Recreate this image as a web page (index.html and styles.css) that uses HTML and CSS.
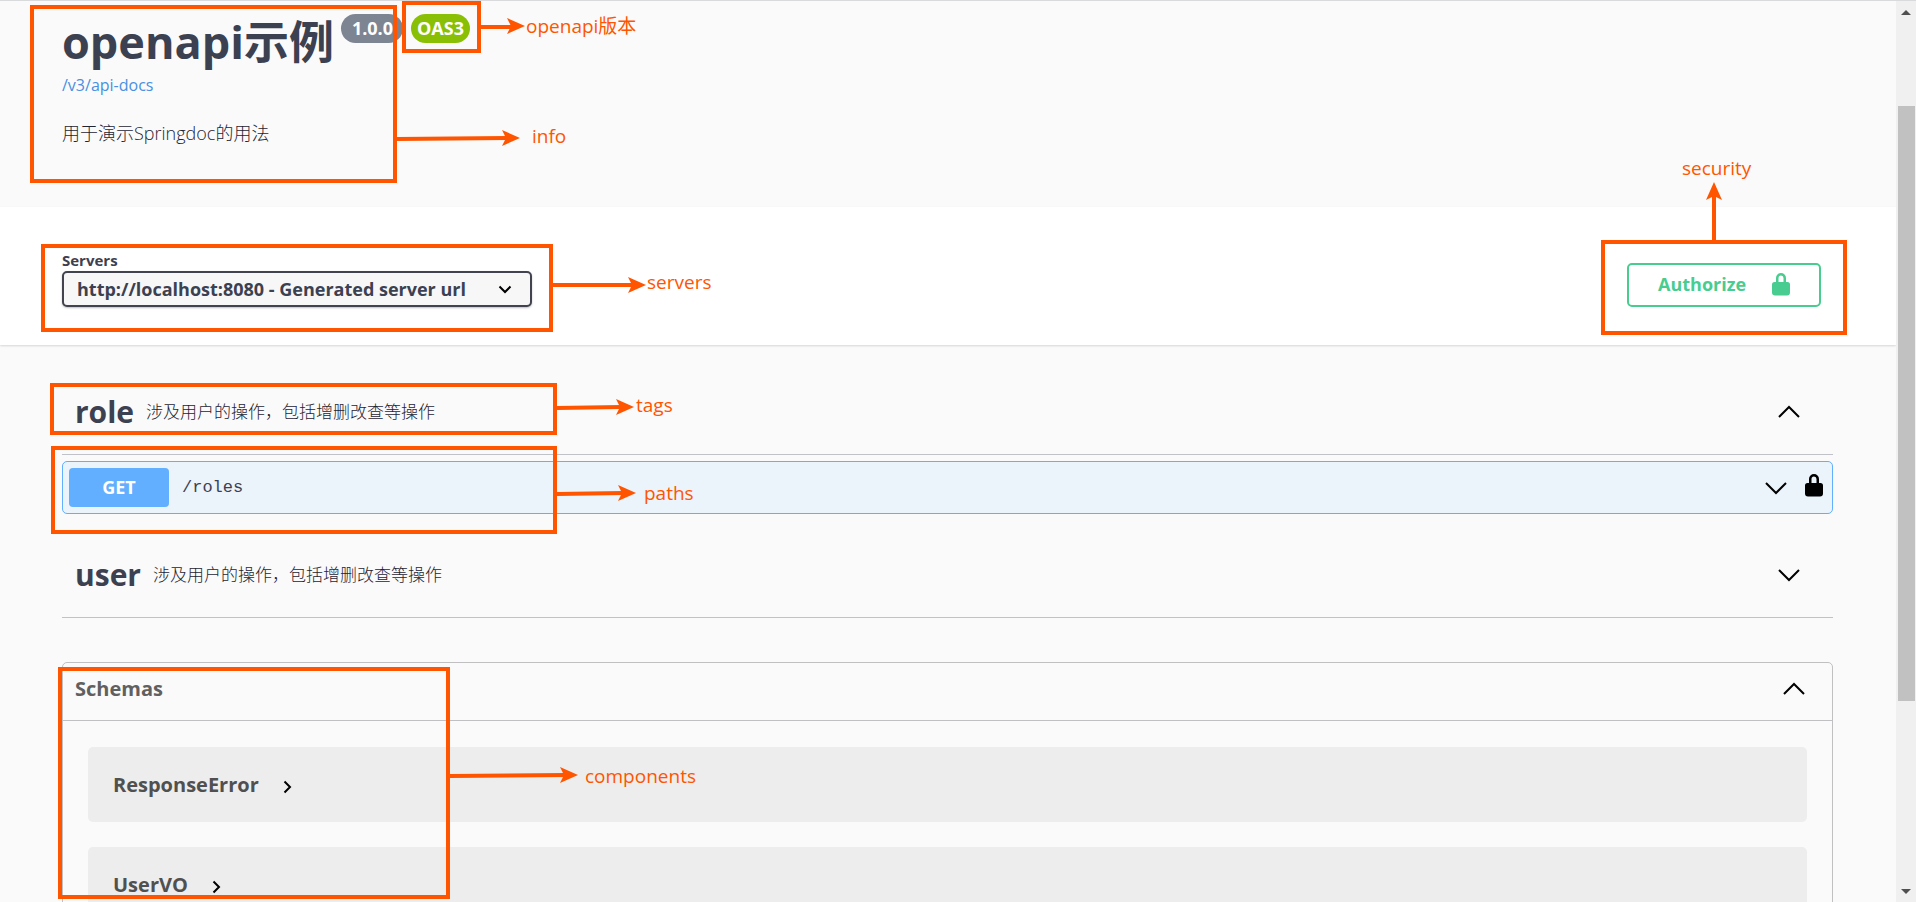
FILE: index.html
```html
<!DOCTYPE html>
<html lang="zh-CN">
<head>
<meta charset="utf-8">
<title>openapi示例</title>
<link rel="stylesheet" href="styles.css">
</head>
<body>
<div class="viewport">
  <main class="page">
    <header class="info wrapper">
      <div class="title-row">
        <h1 class="title">openapi示例</h1>
        <span class="badge badge-version">1.0.0</span>
        <span class="badge badge-oas">OAS3</span>
      </div>
      <a class="docs-link" href="#">/v3/api-docs</a>
      <p class="summary">用于演示Springdoc的用法</p>
    </header>

    <section class="schemes wrapper">
      <div class="servers">
        <label class="servers-label" for="server">Servers</label>
        <div class="select-wrap">
          <select class="server-select" id="server">
            <option>http://localhost:8080 - Generated server url</option>
          </select>
          <svg class="select-arrow" width="14" height="9" viewBox="0 0 14 9"><path d="M1.500 1.500 7 7l5.500-5.500"/></svg>
        </div>
      </div>
      <button class="authorize" type="button">
        <span>Authorize</span>
        <svg class="lock" width="18" height="23" viewBox="0 0 18 23"><path d="M4 9V5a5 5 0 0 1 10 0v4h1.500a2.500 2.500 0 0 1 2.500 2.500v8a3 3 0 0 1-3 3H3a3 3 0 0 1-3-3v-8A2.500 2.500 0 0 1 2.500 9zM6.500 9h5V5a2.500 2.500 0 0 0-5 0z"/></svg>
      </button>
    </section>

    <section class="operations wrapper">
      <div class="tag">
        <h2 class="tag-name">role</h2>
        <span class="tag-desc">涉及用户的操作，包括增删改查等操作</span>
        <button class="toggle" type="button" aria-label="Collapse role"><svg class="chevron" width="24" height="14" viewBox="0 0 24 14"><path d="M2 12 12 2l10 10"/></svg></button>
      </div>
      <div class="opblock">
        <span class="method">GET</span>
        <span class="path">/roles</span>
        <button class="toggle" type="button" aria-label="Expand /roles"><svg class="chevron" width="24" height="14" viewBox="0 0 24 14"><path d="M2 2l10 10L22 2"/></svg></button>
        <button class="toggle toggle-lock" type="button" aria-label="Authorization"><svg class="lock" width="18" height="23" viewBox="0 0 18 23"><path d="M4 9V5a5 5 0 0 1 10 0v4h1.500a2.500 2.500 0 0 1 2.500 2.500v8a3 3 0 0 1-3 3H3a3 3 0 0 1-3-3v-8A2.500 2.500 0 0 1 2.500 9zM6.500 9h5V5a2.500 2.500 0 0 0-5 0z"/></svg></button>
      </div>
      <div class="tag">
        <h2 class="tag-name">user</h2>
        <span class="tag-desc">涉及用户的操作，包括增删改查等操作</span>
        <button class="toggle" type="button" aria-label="Expand user"><svg class="chevron" width="24" height="14" viewBox="0 0 24 14"><path d="M2 2l10 10L22 2"/></svg></button>
      </div>
    </section>

    <section class="wrapper">
      <div class="models">
        <div class="models-head">
          <h3 class="models-title">Schemas</h3>
          <button class="toggle" type="button" aria-label="Collapse schemas"><svg class="chevron" width="24" height="14" viewBox="0 0 24 14"><path d="M2 12 12 2l10 10"/></svg></button>
        </div>
        <div class="models-list">
          <button class="model" type="button">ResponseError<svg class="caret" width="9" height="14" viewBox="0 0 9 14"><path d="M1.500 1.500 7 7l-5.500 5.500"/></svg></button>
          <button class="model" type="button">UserVO<svg class="caret" width="9" height="14" viewBox="0 0 9 14"><path d="M1.500 1.500 7 7l-5.500 5.500"/></svg></button>
        </div>
      </div>
    </section>
  </main>

  <div class="scrollbar">
    <svg width="10" height="5" viewBox="0 0 10 5"><path d="M0 5 5 0l5 5z"/></svg>
    <div class="thumb"></div>
    <svg width="10" height="5" viewBox="0 0 10 5"><path d="M0 0 5 5l5-5z"/></svg>
  </div>

  <svg class="notes notes-left" width="760" height="902" viewBox="0 0 760 902">
    <g class="frame">
      <rect x="32" y="7" width="363" height="174"/>
      <rect x="404" y="3" width="75" height="48"/>
      <rect x="43" y="246" width="508" height="84"/>
      <rect x="52" y="385" width="503" height="48"/>
      <rect x="53" y="448" width="502" height="84"/>
      <rect x="60" y="669" width="388" height="228"/>
      <path d="M481 27h32M397 139l110-1M553 285h80M557 408l64-1M557 494l66-1M450 776l116-1"/>
    </g>
    <g class="head">
      <path d="M525 26l-18-8 4 8-4 8z"/>
      <path d="M520 138l-18-8 4 8-4 8z"/>
      <path d="M646 285l-18-8 4 8-4 8z"/>
      <path d="M634 407l-18-8 4 8-4 8z"/>
      <path d="M636 493l-18-8 4 8-4 8z"/>
      <path d="M578 775l-18-8 4 8-4 8z"/>
    </g>
    <g class="note-text">
      <text x="526" y="33">openapi版本</text>
      <text x="532" y="143">info</text>
      <text x="647" y="289">servers</text>
      <text x="636" y="412">tags</text>
      <text x="644" y="500">paths</text>
      <text x="585" y="783">components</text>
    </g>
  </svg>
  <svg class="notes notes-right" width="330" height="902" viewBox="0 0 330 902">
    <g class="frame">
      <rect x="17" y="242" width="242" height="91"/>
      <path d="M128 240v-45"/>
    </g>
    <path class="head" d="M128 182l-8 18 8-4 8 4z"/>
    <text class="note-text" x="96" y="175">security</text>
  </svg>
</div>
</body>
</html>
```
FILE: styles.css
```css
* {
  box-sizing: border-box;
}

body {
  margin: 0;
  background: #fafafa;
  color: #3b4151;
  font-family: "Open Sans", "Noto Sans CJK SC", sans-serif;
  font-size: 18px;
}

h1, h2, h3, p {
  margin: 0;
}

button, select {
  font: inherit;
  color: inherit;
}

.viewport {
  position: relative;
  display: flex;
  height: 100vh;
  overflow: hidden;
  border-top: 1px solid #d9dadc;
}

.page {
  flex: 1;
}

.wrapper {
  padding-left: 62px;
  padding-right: 63px;
}

.info {
  padding-top: 10px;
  padding-bottom: 61px;
}

.title-row {
  display: flex;
  align-items: flex-start;
}

.title {
  margin-right: 7px;
  font-size: 45px;
  line-height: 62px;
  font-weight: 700;
}

.badge {
  margin-top: 3px;
  border-radius: 15px;
  line-height: 29px;
  font-weight: 700;
  color: #fff;
}

.badge-version {
  padding: 0 10px 0 11px;
  margin-right: 8px;
  background: #7d8492;
}

.badge-oas {
  padding: 0 6px;
  background: #89bf04;
}

.docs-link {
  display: block;
  font-size: 16px;
  line-height: 24px;
  color: #4990e2;
  text-decoration: none;
}

.summary {
  margin-top: 23px;
  line-height: 26px;
  font-weight: 300;
  color: #1f2433;
}

.schemes {
  display: flex;
  justify-content: space-between;
  align-items: flex-start;
  height: 138px;
  padding-top: 43px;
  background: #fff;
  box-shadow: 0 1px 2px rgba(0, 0, 0, 0.15);
}

.servers {
  width: 470px;
}

.servers-label {
  display: block;
  font-size: 15px;
  line-height: 21px;
  font-weight: 700;
}

.select-wrap {
  position: relative;
}

.server-select {
  appearance: none;
  display: block;
  width: 100%;
  height: 36px;
  padding: 0 50px 0 13px;
  border: 2px solid #41444e;
  border-radius: 5px;
  background: #f7f7f7;
  box-shadow: 0 1px 2px rgba(0, 0, 0, 0.25);
  font-weight: 700;
}

.select-arrow {
  position: absolute;
  right: 20px;
  top: 14px;
}

.select-arrow path,
.caret path {
  fill: none;
  stroke: #000;
  stroke-width: 2;
}

.authorize {
  display: flex;
  align-items: center;
  justify-content: space-between;
  width: 194px;
  height: 44px;
  margin-top: 13px;
  margin-right: 12px;
  padding: 0 29px 2px;
  border: 2px solid #49cc90;
  border-radius: 5px;
  background: transparent;
  color: #49cc90;
  font-weight: 700;
}

.lock {
  fill: currentColor;
}

.operations {
  padding-top: 37px;
}

.tag {
  display: flex;
  align-items: center;
  height: 73px;
  padding: 0 32px 12px 13px;
  border-bottom: 1px solid #c0c2c8;
}

.opblock + .tag {
  height: 74px;
}

.tag-name {
  margin-right: 12px;
  font-size: 30px;
  line-height: 40px;
  font-weight: 700;
}

.tag-desc {
  font-size: 17px;
  line-height: 24px;
  font-weight: 300;
  color: #1f2433;
}

.toggle {
  display: flex;
  margin-left: auto;
  padding: 0;
  border: 0;
  background: none;
  color: #000;
}

.chevron path {
  fill: none;
  stroke: #000;
  stroke-width: 2;
}

.opblock {
  display: flex;
  align-items: center;
  height: 53px;
  margin: 6px 0 30px;
  padding: 0 9px 0 6px;
  border: 1px solid #61affe;
  border-radius: 5px;
  background: #ebf3fb;
}

.method {
  width: 100px;
  margin-right: 13px;
  border-radius: 4px;
  background: #61affe;
  color: #fff;
  line-height: 39px;
  font-weight: 700;
  text-align: center;
}

.path {
  font-family: "Liberation Mono", monospace;
  font-size: 17px;
}

.toggle-lock {
  margin-left: 17px;
  padding-bottom: 4px;
}

.models {
  margin-top: 44px;
  border: 1px solid #c0c0c3;
  border-radius: 5px;
}

.models-head {
  display: flex;
  align-items: center;
  height: 58px;
  padding: 0 26px 5px 12px;
  border-bottom: 1px solid #c0c0c3;
}

.models-title {
  font-size: 20px;
  line-height: 28px;
  font-weight: 700;
  color: #606060;
}

.models-list {
  display: flex;
  flex-direction: column;
  gap: 25px;
  padding: 26px 25px;
}

.model {
  display: flex;
  align-items: center;
  gap: 24px;
  height: 75px;
  padding: 0 25px;
  border: 0;
  border-radius: 5px;
  background: #ededed;
  color: #505050;
  font-size: 20px;
  font-weight: 700;
}

.caret {
  margin-top: 4px;
}

.scrollbar {
  display: flex;
  flex-direction: column;
  align-items: center;
  width: 20px;
  padding: 9px 1px 8px;
  background: #f0f0f0;
  fill: #505050;
}

.thumb {
  width: 17px;
  height: 595px;
  margin: 91px 0 auto;
  background: #c1c1c1;
}

.notes {
  position: absolute;
  top: -1px;
  pointer-events: none;
}

.notes-left {
  left: 0;
}

.notes-right {
  right: 0;
}

.frame {
  fill: none;
  stroke: #ff5500;
  stroke-width: 4;
}

.head {
  fill: #ff5500;
}

.note-text {
  fill: #ff5500;
  font-size: 19px;
}
```
